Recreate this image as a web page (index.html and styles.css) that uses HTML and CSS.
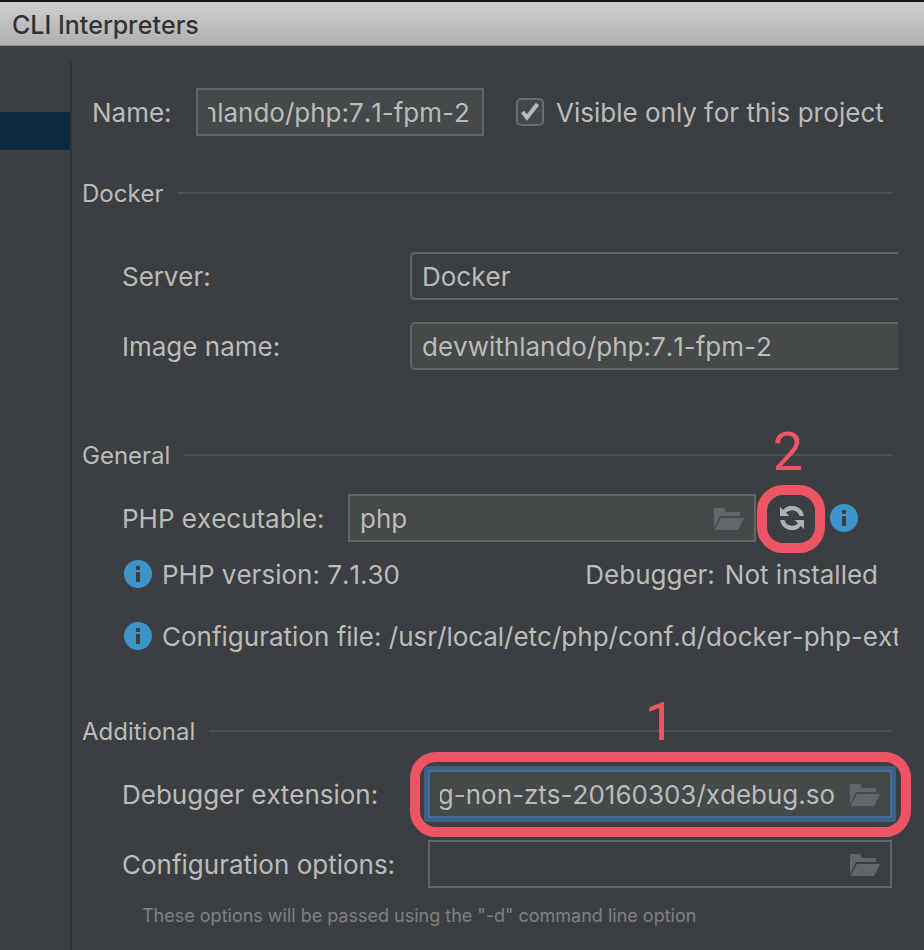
FILE: index.html
```html
<!DOCTYPE html>
<html lang="en">
<head>
<meta charset="utf-8">
<title>CLI Interpreters</title>
<link rel="stylesheet" href="styles.css">
</head>
<body>
<svg class="defs" aria-hidden="true">
  <symbol id="folder" viewBox="0 0 30 22"><path d="M0 0H10L12 4H26V8H6L0 20ZM7 10H30L24 22H0.5Z"/></symbol>
  <symbol id="info" viewBox="0 0 28 28"><circle cx="14" cy="14" r="14" fill="#3d94c9"/><path d="M12 6h4v4h-4zM12 12h4v10h-4z" fill="#3c3f41"/></symbol>
</svg>
<header class="titlebar"><h1>CLI Interpreters</h1></header>
<div class="window">
  <aside class="sidebar"><div class="selected"></div></aside>
  <main class="panel">
    <div class="row name-row">
      <label class="caption" for="name">Name:</label>
      <input class="field scrolled" id="name" type="text" value="devwithlando/php:7.1-fpm-2">
      <label class="check"><input type="checkbox" checked><svg viewBox="0 0 28 28" aria-hidden="true"><path d="M6.500 14L11 19.500L21.500 6"/></svg><span>Visible only for this project</span></label>
    </div>

    <section class="docker">
      <h2>Docker</h2>
      <div class="row">
        <label class="caption" for="server">Server:</label>
        <select class="field" id="server"><option>Docker</option></select>
      </div>
      <div class="row">
        <label class="caption" for="image">Image name:</label>
        <input class="field" id="image" type="text" value="devwithlando/php:7.1-fpm-2">
      </div>
    </section>

    <section class="general">
      <h2>General</h2>
      <div class="row">
        <label class="caption" for="php">PHP executable:</label>
        <div class="browse">
          <input class="field" id="php" type="text" value="php">
          <button type="button" aria-label="Browse executable"><svg><use href="#folder"/></svg></button>
        </div>
        <button class="refresh" type="button" aria-label="Refresh">
          <svg viewBox="0 0 24 24"><path id="arrow" d="M0 .7L3 4A12 12 0 0 1 23.900 10H19.600A8 8 0 0 0 6 6.800L9.300 10H0Z"/><use href="#arrow" transform="rotate(180 12 12)"/></svg>
          <span class="ring"></span><span class="step">2</span>
        </button>
        <svg class="info"><use href="#info"/></svg>
      </div>
      <div class="status">
        <svg class="info"><use href="#info"/></svg><span>PHP version: 7.1.30</span>
        <span class="debugger"><span>Debugger:</span><span>Not installed</span></span>
      </div>
      <div class="status config">
        <svg class="info"><use href="#info"/></svg><span>Configuration file: /usr/local/etc/php/conf.d/docker-php-ext-xdebug.ini</span>
      </div>
    </section>

    <section class="additional">
      <h2>Additional</h2>
      <div class="row">
        <label class="caption" for="extension">Debugger extension:</label>
        <div class="browse active">
          <input class="field scrolled" id="extension" type="text" value="/usr/local/lib/php/extensions/no-debug-non-zts-20160303/xdebug.so">
          <button type="button" aria-label="Browse extension"><svg><use href="#folder"/></svg></button>
          <span class="ring"></span><span class="step">1</span>
        </div>
      </div>
      <div class="row">
        <label class="caption" for="options">Configuration options:</label>
        <div class="browse">
          <input class="field plain" id="options" type="text">
          <button type="button" aria-label="Edit options"><svg><use href="#folder"/></svg></button>
        </div>
      </div>
      <p class="hint">These options will be passed using the "-d" command line option</p>
    </section>
  </main>
</div>
<script src="script.js"></script>
</body>
</html>
```
FILE: styles.css
```css
* { box-sizing: border-box; }
body {
  margin: 0;
  min-height: 100vh;
  display: flex;
  flex-direction: column;
  background: #3c3f41;
  color: #bbb;
  font: 400 26px/30px Inter, "Liberation Sans", sans-serif;
  font-kerning: none;
  overflow-x: hidden;
}
.defs { position: absolute; width: 0; height: 0; }
h1, h2, p { margin: 0; font-weight: 400; }
input, select, button { font: inherit; font-kerning: inherit; color: inherit; margin: 0; }
button { padding: 0; border: 0; background: none; }
svg { display: block; flex: none; }

.titlebar {
  height: 46px;
  padding: 8px 12px;
  border-top: 2px solid #161616;
  border-bottom: 1px solid #8a8a8a;
  background: linear-gradient(#cecece, #b0b0b0);
  color: #333;
}
h1 { font-size: 25px; font-weight: 500; line-height: 30px; }

.window { flex: 1; display: flex; }
.sidebar { width: 70px; flex: none; padding-top: 66px; }
.selected { height: 38px; background: #0d293e; }
.panel {
  flex: 1;
  min-width: 0;
  margin-top: 16px;
  padding: 26px 32px 22px 10px;
  border-left: 2px solid #323232;
}

.row { display: flex; align-items: center; height: 48px; }
.row + .row { margin-top: 22px; }
.row label { flex: none; white-space: nowrap; }
.caption, .check > span, .status > span { padding-top: 2px; }
.field {
  width: 100%;
  min-width: 0;
  height: 48px;
  padding: 0 10px;
  border: 2px solid #646464;
  border-radius: 0;
  background: #45494a;
  outline: 0;
}
.plain { background: transparent; }

.name-row { padding-left: 10px; }
.name-row .caption { width: 104px; }
.name-row .field { flex: 0 1 288px; padding-right: 12px; }
.check { position: relative; display: flex; align-items: center; gap: 12px; margin-left: 32px; }
.check input {
  appearance: none;
  width: 28px;
  height: 28px;
  border: 2px solid #6b6b6b;
  border-radius: 5px;
  background: #43494a;
}
.check svg { position: absolute; left: 0; width: 28px; height: 28px; fill: none; stroke: #bbb; stroke-width: 4; }

h2 { display: flex; align-items: center; gap: 14px; font-size: 24px; line-height: 32px; }
h2::after { content: ""; flex: 1; height: 2px; margin-bottom: 2px; background: #515151; }

.docker { margin-top: 42px; }
.docker h2 { margin-bottom: 42px; }
.docker .row { margin-right: -6px; padding-left: 40px; }
.docker .caption { width: 288px; }
.docker .field {
  appearance: none;
  border-right: 0;
  border-radius: 5px 0 0 5px;
}
.docker select { padding-top: 2px; background: transparent; }

.general { margin-top: 70px; }
.general h2, .additional h2 { margin-bottom: 22px; }
.general .row { padding-left: 40px; }
.general .caption { width: 226px; }
.browse { position: relative; flex: 1; min-width: 0; }
.browse .field { display: block; padding-right: 54px; }
.browse > button { position: absolute; right: 12px; top: 14px; }
.browse > button svg { width: 30px; height: 22px; fill: #60676a; }
.refresh { position: relative; width: 24px; height: 24px; margin: 0 26px 0 24px; }
.refresh svg { width: 24px; height: 24px; fill: #afb1b3; }
.info { width: 28px; height: 28px; }
.general .row .info { margin-right: 34px; }
.status { display: flex; align-items: center; gap: 10px; height: 28px; margin: 18px 14px 0 42px; white-space: nowrap; }
.status.config { margin: 34px -6px 0 42px; overflow-x: clip; }
.debugger { display: flex; gap: 10px; margin-left: auto; }

.additional { margin-top: 66px; }
.additional .row { padding-left: 40px; }
.additional .caption { width: 306px; }
.active .field { border-color: #466d94; box-shadow: 0 0 0 4px #3d6185; border-radius: 1px; padding-right: 55px; }
.hint { margin: 16px 0 0 60px; font-size: 18px; line-height: 24px; color: #808080; }

.ring { position: absolute; inset: -18px -19px -19px -18px; border: 10px solid #ed5565; border-radius: 26px; pointer-events: none; }
.refresh .ring { inset: -21px -21px -23px -23px; }
.step {
  position: absolute;
  left: 50%;
  bottom: 64px;
  transform: translateX(-50%);
  font: 400 54px/64px Roboto, sans-serif;
  color: #ed5565;
}
.refresh .step { left: 8px; bottom: 46px; }
```
FILE: script.js
```js
// Long values show their end, as after typing or pasting a path.
document.querySelectorAll('.scrolled').forEach((field) => {
  field.scrollLeft = field.scrollWidth;
});
```
